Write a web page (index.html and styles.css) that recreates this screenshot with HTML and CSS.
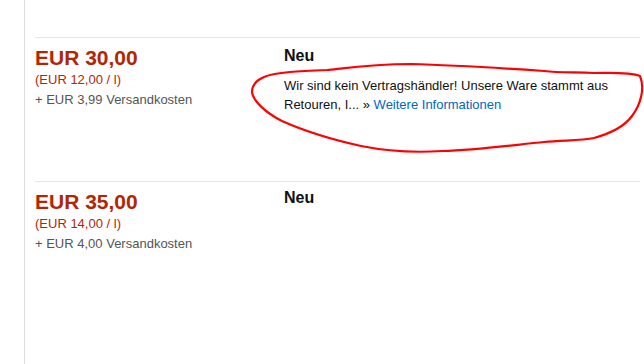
FILE: index.html
```html
<!DOCTYPE html>
<html lang="de">
<head>
    <meta charset="UTF-8">
    <meta name="viewport" content="width=device-width, initial-scale=1.0">
    <title>Angebote</title>
    <link rel="stylesheet" href="styles.css">
</head>
<body>
    <!-- Angebotsliste -->
    <div class="offers">
        <div class="offer-row">
            <div class="offer-price">
                <div class="price">EUR 30,00</div>
                <div class="unit-price">(EUR 12,00 / l)</div>
                <div class="shipping">+ EUR 3,99 Versandkosten</div>
            </div>
            <div class="offer-condition">
                <div class="condition">Neu</div>
                <div class="condition-note">
                    Wir sind kein Vertragshändler! Unsere Ware stammt aus Retouren, I... &raquo; <a href="#">Weitere Informationen</a>
                </div>
            </div>
        </div>

        <div class="offer-row">
            <div class="offer-price">
                <div class="price">EUR 35,00</div>
                <div class="unit-price">(EUR 14,00 / l)</div>
                <div class="shipping">+ EUR 4,00 Versandkosten</div>
            </div>
            <div class="offer-condition">
                <div class="condition condition-tight">Neu</div>
            </div>
        </div>
    </div>

    <!-- Markierung (Annotation) -->
    <svg class="markup" width="644" height="364" viewBox="0 0 644 364">
        <path d="M264,77 C276,72 300,71 327,70 C346,68 372,64 411,64 C450,65 500,68 544,71 C560,73 576,72 594,73 C612,73 630,72 640,76 C645,88 641,104 632,116 C624,127 612,133 594,138 C580,141 563,140 544,142 C520,144 482,150 442,151 C412,153 386,151 361,146 C334,140 302,130 282,121 C266,113 253,101 252,92 C252,85 257,80 264,77 Z"/>
    </svg>
</body>
</html>
```

FILE: styles.css
```css
body {
    margin: 0;
    background-color: #fff;
    font-family: "Liberation Sans", Arial, sans-serif;
    color: #111;
    position: relative;
}
.offers {
    margin-left: 24px;
    min-height: 100vh;
    box-sizing: border-box;
    border-left: 1px solid #ddd;
    padding: 37px 0 0 10px;
    width: 616px;
}
.offer-row {
    display: flex;
    border-top: 1px solid #e7e7e7;
    padding-top: 8px;
    min-height: 144px;
    box-sizing: border-box;
}
.offer-price {
    width: 249px;
    flex-shrink: 0;
    font-size: 13px;
    line-height: 20px;
}
.price {
    font-size: 21px;
    line-height: 24px;
    font-weight: bold;
    color: #b12704;
}
.unit-price {
    color: #b12704;
}
.shipping {
    color: #555;
}
.offer-condition {
    width: 350px;
}
.condition {
    font-size: 16px;
    line-height: 20px;
    font-weight: bold;
    color: #111;
    margin-bottom: 10px;
}
.condition-tight {
    margin-top: -2px;
}
.condition-note {
    font-size: 13px;
    line-height: 19px;
    color: #111;
}
.condition-note a {
    color: #0066c0;
    text-decoration: none;
}
.markup {
    position: absolute;
    top: 0;
    left: 0;
    pointer-events: none;
}
.markup path {
    fill: none;
    stroke: #f00;
    stroke-width: 2.2;
    stroke-linejoin: round;
}
```
